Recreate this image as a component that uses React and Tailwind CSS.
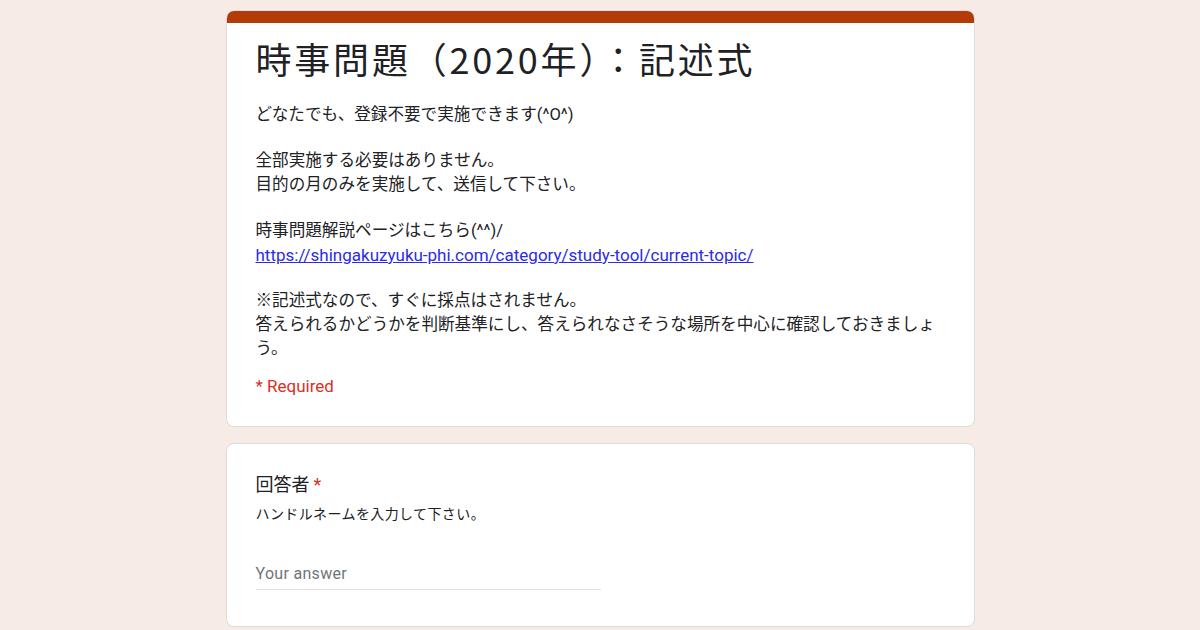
import React from "react";

const jp = { fontFamily: "Roboto, 'Noto Sans CJK JP', sans-serif" };

export default function App() {
  return (
    <div className="flex h-[630px] w-[1200px] justify-center overflow-hidden bg-[#f6ebe5]" style={jp}>
      <div className="flex w-[749px] flex-col gap-4 pt-[10px]">
        <div className="overflow-hidden rounded-lg border border-[#dadce0] bg-white">
          <div className="h-[12px] bg-[#b33b07]" />
          <div className="px-[29px] pb-[28px] pt-[13px]">
            <h1
              className="text-[36px] leading-[44px] tracking-[2.8px] text-[#202124]"
              style={{ fontFamily: "'Noto Sans CJK JP', sans-serif" }}
            >
              時事問題（2020年）：記述式
            </h1>
            <div className="mt-[23px] text-[16.6px] leading-[24px] text-[#202124]">
              <p>どなたでも、登録不要で実施できます(^O^)</p>
              <p className="mt-[22px]">全部実施する必要はありません。</p>
              <p>目的の月のみを実施して、送信して下さい。</p>
              <p className="mt-[22px]">時事問題解説ページはこちら(^^)/</p>
              <p className="text-[17px]">
                <a className="text-[#2b2bea] underline" href="#">https://shingakuzyuku-phi.com/category/study-tool/current-topic/</a>
              </p>
              <p className="mt-[22px]">※記述式なので、すぐに採点はされません。</p>
              <p className="whitespace-nowrap">答えられるかどうかを判断基準にし、答えられなさそうな場所を中心に確認しておきましょ</p>
              <p>う。</p>
            </div>
            <p className="mt-[13px] text-[17px] leading-[24px] text-[#d93025]">* Required</p>
          </div>
        </div>
        <div className="h-[184px] rounded-lg border border-[#dadce0] bg-white px-[29px] pt-[28px]">
          <p className="text-[18px] leading-[26px] text-[#202124]">
            回答者<span className="ml-1 text-[#d93025]">*</span>
          </p>
          <p className="mt-[6px] text-[14px] leading-[20px] tracking-[0.4px] text-[#202124]">ハンドルネームを入力して下さい。</p>
          <div className="mt-[38px] w-[345px] border-b border-[#e0e0e0] pb-[3px]">
            <span className="text-[16px] leading-[22px] tracking-[0.3px] text-[#70757a]">Your answer</span>
          </div>
        </div>
      </div>
    </div>
  );
}
